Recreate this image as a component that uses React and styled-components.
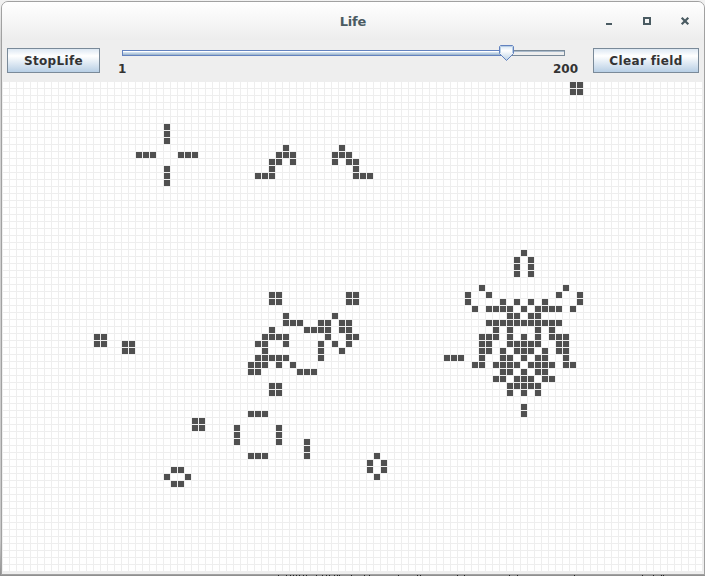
import React from "react";
import styled, { createGlobalStyle } from "styled-components";

const GlobalStyle = createGlobalStyle`
  html, body { margin: 0; padding: 0; overflow: hidden; background: #d9d9d9; }
  * { box-sizing: border-box; }
`;

const Desktop = styled.div`
  position: relative;
  width: 705px;
  height: 576px;
  padding: 1px 0 0 1px;
  overflow: hidden;
  background: linear-gradient(#f2f2f2 0, #d4d4d4 40px, #c8c8c8 540px, #8f8f8f 576px);
  font-family: "DejaVu Sans", sans-serif;
`;

const Window = styled.div`
  display: flex;
  flex-direction: column;
  width: 704px;
  height: 574px;
  border: 1px solid #a1a1a1;
  border-radius: 7px 7px 0 0;
  background: #eeeeee;
  overflow: hidden;
`;

const TitleBar = styled.header`
  display: grid;
  grid-template-columns: 1fr auto 1fr;
  align-items: center;
  height: 38px;
  flex: none;
  background: linear-gradient(#ffffff, #ededed);
`;

const Title = styled.h1`
  grid-column: 2;
  margin: 0;
  padding-top: 1px;
  font-size: 13px;
  line-height: 16px;
  font-weight: bold;
  letter-spacing: -0.2px;
  color: #4a5b62;
`;

const WindowControls = styled.div`
  display: flex;
  justify-content: flex-end;
  gap: 26px;
  padding: 0 13px 0 0;
`;

const ControlIcon = styled.svg`
  display: block;
  width: 12px;
  height: 12px;
  color: #4a5b62;
`;

const Toolbar = styled.div`
  display: flex;
  align-items: flex-start;
  height: 42px;
  flex: none;
  padding: 0 5px;
`;

const Button = styled.button`
  width: ${(p) => p.$width}px;
  height: 25px;
  margin: 8px 0 0;
  padding: 1px 0 0;
  flex: none;
  border: 1px solid #7a8a99;
  border-radius: 0;
  background: linear-gradient(#dde8f3 0%, #ffffff 30%, #b8cfe5 100%);
  font: bold 12px/16px "DejaVu Sans", sans-serif;
  letter-spacing: 0.35px;
  color: #333333;
`;

const SpeedSlider = styled.div`
  display: flex;
  flex-direction: column;
  flex: 1;
  padding: 5px 15px 0 18px;
`;

const SliderDrawing = styled.svg`
  display: block;
  width: 443px;
  height: 16px;
  margin-left: 4px;
`;

const SliderLabels = styled.div`
  display: flex;
  justify-content: space-between;
  font-size: 12px;
  line-height: 17px;
  font-weight: bold;
  color: #333333;
`;

const Board = styled.svg`
  display: block;
  width: 702px;
  height: 492px;
  flex: none;
`;

const BottomText = styled.svg`
  position: absolute;
  left: 0;
  bottom: 0;
  width: 705px;
  height: 1px;
`;

const CELL = 7;

// Live columns by row.
const LIVE = {
  0: [81, 82],
  1: [81, 82],
  6: [23],
  7: [23],
  8: [23],
  9: [40, 48],
  10: [19, 20, 21, 25, 26, 27, 39, 40, 41, 47, 48, 49],
  11: [38, 39, 41, 47, 49, 50],
  12: [23, 38, 50],
  13: [23, 36, 37, 38, 50, 51, 52],
  14: [23],
  24: [74],
  25: [73, 75],
  26: [73, 75],
  27: [73, 75],
  29: [68, 80],
  30: [38, 39, 49, 50, 66, 69, 79, 82],
  31: [38, 39, 49, 50, 66, 71, 73, 75, 77, 82],
  32: [67, 69, 70, 71, 72, 74, 76, 77, 78, 79, 81],
  33: [40, 47, 72, 73, 75, 76],
  34: [40, 41, 42, 45, 46, 48, 49, 69, 70, 71, 72, 73, 74, 75, 76, 77, 78, 79],
  35: [38, 43, 44, 45, 46, 48, 49, 70, 72, 76, 78],
  36: [13, 14, 37, 38, 39, 40, 46, 49, 50, 68, 69, 70, 72, 74, 76, 78, 79, 80],
  37: [13, 14, 17, 18, 36, 37, 40, 45, 47, 49, 68, 69, 72, 73, 74, 75, 76, 79, 80],
  38: [17, 18, 37, 45, 48, 68, 69, 71, 73, 74, 75, 77, 79, 80],
  39: [36, 37, 38, 39, 40, 45, 63, 64, 65, 68, 71, 72, 74, 76, 77, 80],
  40: [35, 36, 37, 39, 41, 67, 68, 70, 71, 72, 73, 75, 76, 77, 78, 80, 81],
  41: [35, 36, 42, 43, 44, 71, 72, 74, 76, 77],
  42: [70, 71, 73, 74, 75, 77, 78],
  43: [38, 39, 72, 73, 74, 75, 76],
  44: [38, 39, 72, 74, 76],
  46: [74],
  47: [35, 36, 37, 74],
  48: [27, 28],
  49: [27, 28, 33, 39],
  50: [33, 39],
  51: [33, 39, 43],
  52: [43],
  53: [35, 36, 37, 43, 53],
  54: [52, 54],
  55: [24, 25, 52, 54],
  56: [23, 26, 53],
  57: [24, 25],
};

// Tops of the glyphs that show below the window's lower edge.
const GLYPH_TOPS = [
  278, 286, 290, 293, 296, 299, 303, 306, 316, 322, 326, 329, 334, 337, 339,
  351, 364, 369, 398, 417, 420, 457, 464, 509, 517, 574, 642, 653, 661, 663,
];

function LifeBoard() {
  return (
    <Board viewBox="0 0 702 492" shapeRendering="crispEdges">
      <defs>
        <pattern id="grid" x="1" y="0" width={CELL} height={CELL} patternUnits="userSpaceOnUse">
          <rect width="6" height="6" fill="#ffffff" />
        </pattern>
      </defs>
      <rect width="702" height="492" fill="#eeeeee" />
      <rect x="1" width="700" height="490" fill="url(#grid)" />
      {Object.entries(LIVE).map(([row, cols]) =>
        cols.map((col) => (
          <rect key={`${row}-${col}`} x={1 + col * CELL} y={row * CELL} width="6" height="6" fill="#505050" />
        ))
      )}
    </Board>
  );
}

function Slider() {
  return (
    <SpeedSlider>
      <SliderDrawing viewBox="0 0 443 16">
        <defs>
          <linearGradient id="thumb" x1="0" y1="0" x2="0" y2="1">
            <stop offset="0" stopColor="#d5e4f3" />
            <stop offset="0.35" stopColor="#ffffff" />
            <stop offset="1" stopColor="#b8cfe5" />
          </linearGradient>
        </defs>
        <g shapeRendering="crispEdges">
          <rect x="385" y="5" width="58" height="6" fill="#7a8a99" />
          <rect x="385" y="6" width="57" height="1" fill="#a9bacb" />
          <rect x="385" y="7" width="57" height="3" fill="#eeeeee" />
          <rect x="0" y="5" width="385" height="6" fill="#6382bf" />
          <rect x="1" y="6" width="384" height="1" fill="#ffffff" />
          <rect x="1" y="7" width="384" height="1" fill="#d2e0ed" />
          <rect x="1" y="8" width="384" height="1" fill="#b8cfe5" />
          <rect x="1" y="9" width="384" height="1" fill="#a3b8cc" />
        </g>
        <path d="M378.5 .5h12l1 1v7l-7 7-7-7v-7z" fill="url(#thumb)" stroke="#6382bf" />
        <path d="M378.5 8V1.5h12V8" fill="none" stroke="#b8cfe5" />
      </SliderDrawing>
      <SliderLabels>
        <span>1</span>
        <span>200</span>
      </SliderLabels>
    </SpeedSlider>
  );
}

export default function App() {
  return (
    <>
      <GlobalStyle />
      <Desktop>
        <Window>
          <TitleBar>
            <Title>Life</Title>
            <WindowControls>
              <ControlIcon viewBox="0 0 12 12" shapeRendering="crispEdges">
                <path d="M3 8h6v2H3z" fill="currentColor" />
              </ControlIcon>
              <ControlIcon viewBox="0 0 12 12" shapeRendering="crispEdges">
                <path d="M3 3h6v6H3z" fill="none" stroke="currentColor" strokeWidth="2" />
              </ControlIcon>
              <ControlIcon viewBox="0 0 12 12">
                <path d="M2.7 2.7l6.6 6.6M9.3 2.7L2.7 9.3" stroke="currentColor" strokeWidth="2.2" />
              </ControlIcon>
            </WindowControls>
          </TitleBar>
          <Toolbar>
            <Button $width={93}>StopLife</Button>
            <Slider />
            <Button $width={106}>Clear field</Button>
          </Toolbar>
          <LifeBoard />
        </Window>
        <BottomText viewBox="0 0 705 1" shapeRendering="crispEdges">
          {GLYPH_TOPS.map((x) => (
            <rect key={x} x={x} width="1" height="1" fill="#222222" />
          ))}
        </BottomText>
      </Desktop>
    </>
  );
}
